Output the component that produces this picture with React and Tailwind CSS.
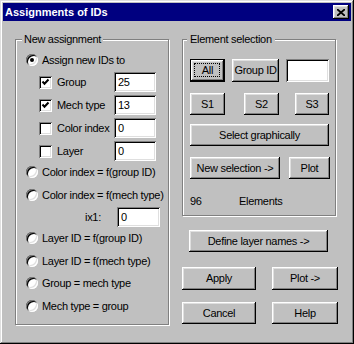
import React from "react";

// raised win9x button bevel
const raised =
  "bg-[#c0c0c0] shadow-[inset_-1px_-1px_#000,inset_1px_1px_#fff,inset_-2px_-2px_#808080,inset_2px_2px_#dfdfdf]";
// sunken field bevel
const sunken =
  "bg-white shadow-[inset_1px_1px_#808080,inset_-1px_-1px_#fff,inset_2px_2px_#000,inset_-2px_-2px_#dfdfdf]";

const Btn = ({ className = "", children, def }) => (
  <div
    className={`relative flex items-center justify-center shrink-0 whitespace-nowrap ${
      def
        ? "bg-[#c0c0c0] border border-black shadow-[inset_-1px_-1px_#000,inset_1px_1px_#fff,inset_-2px_-2px_#808080,inset_2px_2px_#dfdfdf]"
        : raised
    } ${className}`}
  >
    {def && (
      <span className="absolute left-[3px] top-[3px] right-[4px] bottom-[4px] border border-dotted border-black" />
    )}
    <span className="relative">{children}</span>
  </div>
);

const Field = ({ className = "", value }) => (
  <div className={`flex items-center pl-[4px] h-[20px] shrink-0 ${sunken} ${className}`}>
    {value}
  </div>
);

const Radio = ({ checked }) => (
  <div className={`w-[12px] h-[12px] rounded-full shrink-0 flex items-center justify-center ${sunken}`}>
    {checked && <div className="w-[4px] h-[4px] rounded-full bg-black" />}
  </div>
);

const Check = ({ checked }) => (
  <div className={`w-[13px] h-[13px] shrink-0 flex items-center justify-center ${sunken}`}>
    {checked && (
      <svg width="9" height="9" viewBox="0 0 9 9">
        <path d="M1.5 3.5 L3.5 5.8 L7.5 1.5" stroke="#000" strokeWidth="2" fill="none" />
      </svg>
    )}
  </div>
);

const GroupBox = ({ label, className = "", labelCls = "", children }) => (
  <div
    className={`relative shrink-0 border border-[#808080] shadow-[1px_1px_0_#fff,inset_1px_1px_0_#fff] ${className}`}
  >
    <span
      className={`absolute top-[-8px] bg-[#c0c0c0] leading-[14px] whitespace-nowrap ${labelCls}`}
    >
      {label}
    </span>
    {children}
  </div>
);

const RadioRow = ({ label, checked, className = "" }) => (
  <div className={`flex items-center gap-[4px] h-[16px] whitespace-nowrap ${className}`}>
    <Radio checked={checked} />
    <span>{label}</span>
  </div>
);

const CheckRow = ({ label, checked, value }) => (
  <div className="flex items-center h-[20px] ml-[13px] whitespace-nowrap">
    <Check checked={checked} />
    <span className="ml-[5px] w-[57px]">{label}</span>
    <Field className="w-[42px]" value={value} />
  </div>
);

export default function App() {
  return (
    <div
      className="w-[354px] h-[344px] bg-[#c0c0c0] p-[3px] pb-[2px] text-[11px] tracking-[-0.3px] text-black shadow-[inset_-1px_-1px_#000,inset_1px_1px_#dfdfdf,inset_-2px_-2px_#808080,inset_2px_2px_#fff] overflow-hidden"
      style={{ fontFamily: '"Liberation Sans", Arial, sans-serif' }}
    >
      {/* Title bar */}
      <div className="h-[18px] bg-[#000080] flex items-center justify-between pl-[2px] pr-[2px]">
        <span className="text-white font-bold text-[11px] tracking-normal">Assignments of IDs</span>
        <div className={`w-[16px] h-[14px] flex items-center justify-center ${raised}`}>
          <svg width="8" height="7" viewBox="0 0 8 7">
            <path d="M0 0 L8 7 M8 0 L0 7" stroke="#000" strokeWidth="1.8" />
          </svg>
        </div>
      </div>

      <div className="flex pl-[12px] pt-[18px]">
        {/* New assignment */}
        <GroupBox label="New assignment" className="w-[154px] h-[286px]" labelCls="left-[6px] px-[2px]">
          <div className="flex flex-col pl-[10px]">
            <RadioRow label="Assign new IDs to" checked className="mt-[12px]" />
            <div className="flex flex-col gap-[3px] mt-[4px]">
              <CheckRow label="Group" checked value="25" />
              <CheckRow label="Mech type" checked value="13" />
              <CheckRow label="Color index" value="0" />
              <CheckRow label="Layer" value="0" />
            </div>
            <RadioRow label="Color index = f(group ID)" className="mt-[3px]" />
            <RadioRow label="Color index = f(mech type)" className="mt-[7px]" />
            <div className="flex items-center h-[20px] mt-[4px]">
              <span className="ml-[59px] w-[32px]">ix1:</span>
              <Field className="w-[43px]" value="0" />
            </div>
            <RadioRow label="Layer ID = f(group ID)" className="mt-[3px]" />
            <RadioRow label="Layer ID = f(mech type)" className="mt-[7px]" />
            <RadioRow label="Group = mech type" className="mt-[6px]" />
            <RadioRow label="Mech type = group" className="mt-[7px]" />
          </div>
        </GroupBox>

        <div className="flex flex-col ml-[13px]">
          {/* Element selection */}
          <GroupBox label="Element selection" className="w-[154px] h-[177px]" labelCls="left-[4px] px-[3px]">
            <div className="flex flex-col pl-[7px]">
              <div className="flex mt-[19px] h-[23px] gap-[7px]">
                <Btn def className="w-[35px] h-[23px]">All</Btn>
                <Btn className="w-[47px] h-[23px]">Group ID</Btn>
                <div className={`w-[43px] h-[23px] ${sunken}`} />
              </div>
              <div className="flex mt-[11px] h-[22px]">
                <Btn className="w-[35px] h-[22px]">S1</Btn>
                <Btn className="w-[35px] h-[22px] ml-[19px]">S2</Btn>
                <Btn className="w-[34px] h-[22px] ml-[16px]">S3</Btn>
              </div>
              <Btn className="w-[139px] h-[22px] mt-[9px]">Select graphically</Btn>
              <div className="flex mt-[11px] h-[22px] gap-[9px]">
                <Btn className="w-[90px] h-[22px]">New selection -&gt;</Btn>
                <Btn className="w-[41px] h-[22px]">Plot</Btn>
              </div>
              <div className="flex items-center h-[14px] mt-[15px]">
                <span className="w-[49px]">96</span>
                <span>Elements</span>
              </div>
            </div>
          </GroupBox>

          <Btn className="w-[139px] h-[22px] mt-[14px] ml-[7px]">Define layer names -&gt;</Btn>
          <div className="flex mt-[15px] gap-[16px]">
            <Btn className="w-[74px] h-[23px]">Apply</Btn>
            <Btn className="w-[66px] h-[23px]">Plot -&gt;</Btn>
          </div>
          <div className="flex mt-[12px] gap-[16px]">
            <Btn className="w-[74px] h-[22px]">Cancel</Btn>
            <Btn className="w-[66px] h-[22px]">Help</Btn>
          </div>
        </div>
      </div>
    </div>
  );
}
